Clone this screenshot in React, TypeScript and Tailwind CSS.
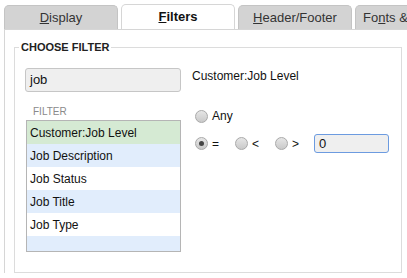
const rows = [
  { label: "Customer:Job Level", bg: "bg-[#d5ead3]" },
  { label: "Job Description", bg: "bg-[#e1edfc]" },
  { label: "Job Status", bg: "bg-white" },
  { label: "Job Title", bg: "bg-[#e1edfc]" },
  { label: "Job Type", bg: "bg-white" },
  { label: "", bg: "bg-[#e1edfc]" },
];

function Tab({ first, rest, active }: { first: string; rest: string; active?: boolean }) {
  return (
    <div
      className={
        "flex w-[114px] shrink-0 items-center justify-center rounded-t-[5px] border border-b-0 text-[13px] " +
        (active
          ? "h-[25px] border-[#d6d6d6] bg-white font-bold text-[#111]"
          : "h-[24px] border-[#c4c4c4] bg-[#d3d3d3] text-[#333]")
      }
    >
      <span>
        <span className="underline">{first}</span>
        {rest}
      </span>
    </div>
  );
}

function Radio({ checked }: { checked?: boolean }) {
  return (
    <span className="flex h-[13px] w-[13px] items-center justify-center rounded-full border border-[#a9a9a9] bg-gradient-to-b from-[#e6e6e6] to-[#c9c9c9]">
      {checked && <span className="h-[5px] w-[5px] rounded-full bg-[#444]" />}
    </span>
  );
}

export default function App() {
  return (
    <div className="h-[278px] w-[407px] overflow-hidden bg-white font-['Liberation_Sans',Arial,sans-serif] text-[#111]">
      {/* Tabs */}
      <div className="flex w-[520px] items-end gap-[3px] pl-[4px] pt-[4px]">
        <Tab first="D" rest="isplay" />
        <Tab first="F" rest="ilters" active />
        <Tab first="H" rest="eader/Footer" />
        <div className="flex h-[24px] w-[114px] shrink-0 items-center rounded-t-[5px] border border-b-0 border-[#c4c4c4] bg-[#d3d3d3] pl-[7px] text-[13px] text-[#333]">
          <span className="whitespace-nowrap">
            Fo<span className="underline">n</span>ts &amp; Numbers
          </span>
        </div>
      </div>

      {/* Panel */}
      <div className="ml-[4px] w-[420px] border-l border-t border-[#d6d6d6] pl-[9px] pt-[17px]">
        <div className="relative h-[226px] w-[388px] border border-[#dcdcdc]">
          <span className="absolute left-[4px] top-[-8px] bg-white px-[2px] text-[11px] font-bold leading-[14px] text-[#222]">
            CHOOSE FILTER
          </span>

          <div className="flex pl-[10px] pt-[20px]">
            {/* Left column */}
            <div className="w-[156px]">
              <div className="flex h-[24px] w-[156px] items-center rounded-[3px] border border-[#c6c6c6] bg-[#efefef] pl-[4px] text-[13px]">
                job
              </div>
              <div className="pl-[8px] pt-[12px] text-[10px] leading-[15px] text-[#8a8a8a]">FILTER</div>
              <div className="mt-[1px] ml-[1px] h-[132px] w-[155px] overflow-hidden border border-[#b5b5b5]">
                {rows.map((r, i) => (
                  <div key={i} className={"flex h-[23px] items-center pl-[3px] text-[12px] " + r.bg}>
                    {r.label}
                  </div>
                ))}
              </div>
            </div>

            {/* Right column */}
            <div className="pl-[11px]">
              <div className="text-[12px] leading-[16px]">Customer:Job Level</div>
              <div className="mt-[23px] flex items-center gap-[4px] pl-[3px] text-[12px]">
                <Radio />
                <span>Any</span>
              </div>
              <div className="mt-[9px] flex items-center pl-[3px] text-[12px]">
                <div className="flex w-[40px] items-center gap-[4px]">
                  <Radio checked />
                  <span>=</span>
                </div>
                <div className="flex w-[40px] items-center gap-[4px]">
                  <Radio />
                  <span>&lt;</span>
                </div>
                <div className="flex w-[39px] items-center gap-[4px]">
                  <Radio />
                  <span>&gt;</span>
                </div>
                <div className="flex h-[19px] w-[75px] items-center rounded-[3px] border border-[#6c9be0] bg-[#efefef] pl-[4px] text-[13px]">
                  0
                </div>
              </div>
            </div>
          </div>
        </div>
      </div>
    </div>
  );
}
